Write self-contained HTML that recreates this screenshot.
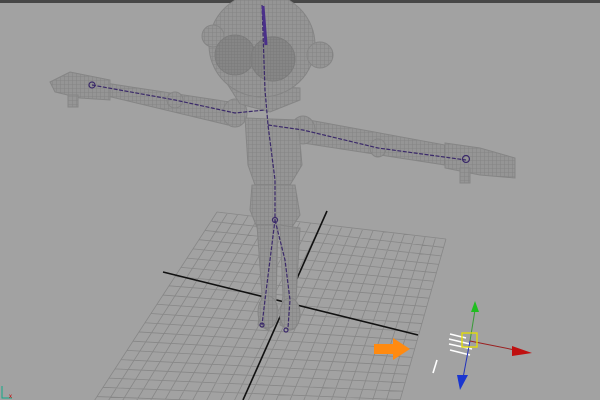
<!DOCTYPE html>
<html><head><style>
html,body{margin:0;padding:0;background:#a2a2a2;overflow:hidden;width:600px;height:400px}
svg{display:block}
</style></head><body>
<svg width="600" height="400" viewBox="0 0 600 400" xmlns="http://www.w3.org/2000/svg">
<defs>
<pattern id="w" width="4" height="4" patternUnits="userSpaceOnUse">
<rect width="4" height="4" fill="#959595"/>
<path d="M0 0H4M0 0V4" stroke="#808080" stroke-width="0.8"/>
</pattern>
<pattern id="wd" width="3" height="3" patternUnits="userSpaceOnUse">
<rect width="3" height="3" fill="#868686"/>
<path d="M0 0H3M0 0V3" stroke="#777" stroke-width="0.8"/>
</pattern>
</defs>
<rect width="600" height="400" fill="#a2a2a2"/>
<rect width="600" height="3" fill="#474747"/>
<g stroke="#878787" stroke-width="0.8" fill="none" id="grid"></g>
<g stroke="#111" stroke-width="1.6">
<line x1="163" y1="272" x2="418" y2="335"/>
<line x1="327" y1="211" x2="243" y2="400"/>
</g>
<g stroke="#858585" stroke-width="1" fill="url(#w)">
<path d="M230 102 L105 83 L103 95 L228 125 Z"/>
<path d="M298 118 L445 145 L445 165 L296 142 Z"/>
<ellipse cx="235" cy="113" rx="12" ry="14"/>
<ellipse cx="303" cy="130" rx="12" ry="14"/>
<ellipse cx="175" cy="100" rx="8" ry="8"/>
<ellipse cx="378" cy="148" rx="8" ry="9"/>
<path d="M50 82 L70 72 L110 80 L110 100 L80 98 L55 92 Z"/>
<rect x="68" y="95" width="10" height="12"/>
<path d="M445 143 L480 148 L515 158 L515 178 L480 175 L445 168 Z"/>
<rect x="460" y="168" width="10" height="15"/>
<path d="M245 118 L298 120 L302 165 L290 185 L255 185 L248 165 Z"/>
<path d="M252 185 L295 185 L300 215 L290 230 L258 230 L250 210 Z"/>
<path d="M257 225 L278 225 L276 300 L268 330 L258 325 L262 295 Z"/>
<path d="M280 225 L300 228 L296 300 L290 330 L280 325 L283 295 Z"/>
<ellipse cx="268" cy="312" rx="10" ry="16"/>
<ellipse cx="290" cy="314" rx="10" ry="16"/>
<path d="M228 85 L300 88 L300 100 L270 112 L240 104 Z"/>
<ellipse cx="262" cy="45" rx="53" ry="52"/>
<circle cx="213" cy="36" r="11"/>
<circle cx="320" cy="55" r="13"/>
</g>
<g stroke="#7c7c7c" fill="url(#wd)">
<circle cx="235" cy="55" r="20"/>
<circle cx="273" cy="59" r="22"/>
</g>
<g stroke="#3b2a6a" stroke-width="1.2" fill="none" stroke-dasharray="4 1.5">
<path d="M262 5 L265 90 L268 125 L275 180 L275 220 L270 260 L265 300 L262 325"/>
<path d="M275 220 L285 260 L290 300 L288 328"/>
<path d="M92 85 L175 100 L235 113 L265 110"/>
<path d="M268 125 L303 130 L378 148 L466 160"/>
</g>
<g stroke="#3b2a6a" stroke-width="1.2" fill="none">
<circle cx="92" cy="85" r="3"/><circle cx="466" cy="159" r="3.5"/>
<circle cx="275" cy="220" r="2.5"/><circle cx="262" cy="325" r="2"/><circle cx="286" cy="330" r="2"/>
</g>
<path d="M263 6 L266 45" stroke="#4a2f8a" stroke-width="3"/>
<path d="M374 344 L393 344 L393 338 L410 349 L393 360 L393 354 L374 354 Z" fill="#ff8a10"/>
<g stroke="#fff" stroke-width="1.6">
<line x1="437" y1="360" x2="433" y2="373"/>
<line x1="450" y1="334" x2="466" y2="338"/>
<line x1="449" y1="339" x2="470" y2="344"/>
<line x1="449" y1="344" x2="472" y2="349"/>
<line x1="450" y1="350" x2="470" y2="355"/>
</g>
<line x1="470" y1="341" x2="475" y2="310" stroke="#3a9a3a" stroke-width="1"/>
<path d="M471 312 L475 301 L479 312 Z" fill="#1fbf1f"/>
<line x1="470" y1="341" x2="463" y2="378" stroke="#2233bb" stroke-width="1"/>
<path d="M457 375 L468 375 L460 390 Z" fill="#1a36d0"/>
<line x1="470" y1="341" x2="515" y2="350" stroke="#9a2020" stroke-width="1"/>
<path d="M512 346 L532 353 L512 356 Z" fill="#c01010"/>
<rect x="462" y="333" width="15" height="14" fill="none" stroke="#e6e000" stroke-width="1.3"/>
<path d="M2 386 L2 398 L12 398" stroke="#1a8" stroke-width="1" fill="none"/>
<text x="9" y="398" font-family="Liberation Sans,sans-serif" font-size="6" fill="#c00">x</text>
</svg>
<script>
(function(){
var g=document.getElementById('grid');
var A=[217,212],B=[446,239],C=[393,425],D=[85,415];
function L(p,q,t){return [p[0]+(q[0]-p[0])*t,p[1]+(q[1]-p[1])*t];}
var n=22,s='';
for(var i=0;i<=n;i++){var t=i/n;
var a=L(A,B,t),b=L(D,C,t);s+='M'+a[0]+' '+a[1]+'L'+b[0]+' '+b[1];
var c=L(A,D,t),d=L(B,C,t);s+='M'+c[0]+' '+c[1]+'L'+d[0]+' '+d[1];}
var p=document.createElementNS('http://www.w3.org/2000/svg','path');
p.setAttribute('d',s);g.appendChild(p);
})();
</script>
</body></html>
